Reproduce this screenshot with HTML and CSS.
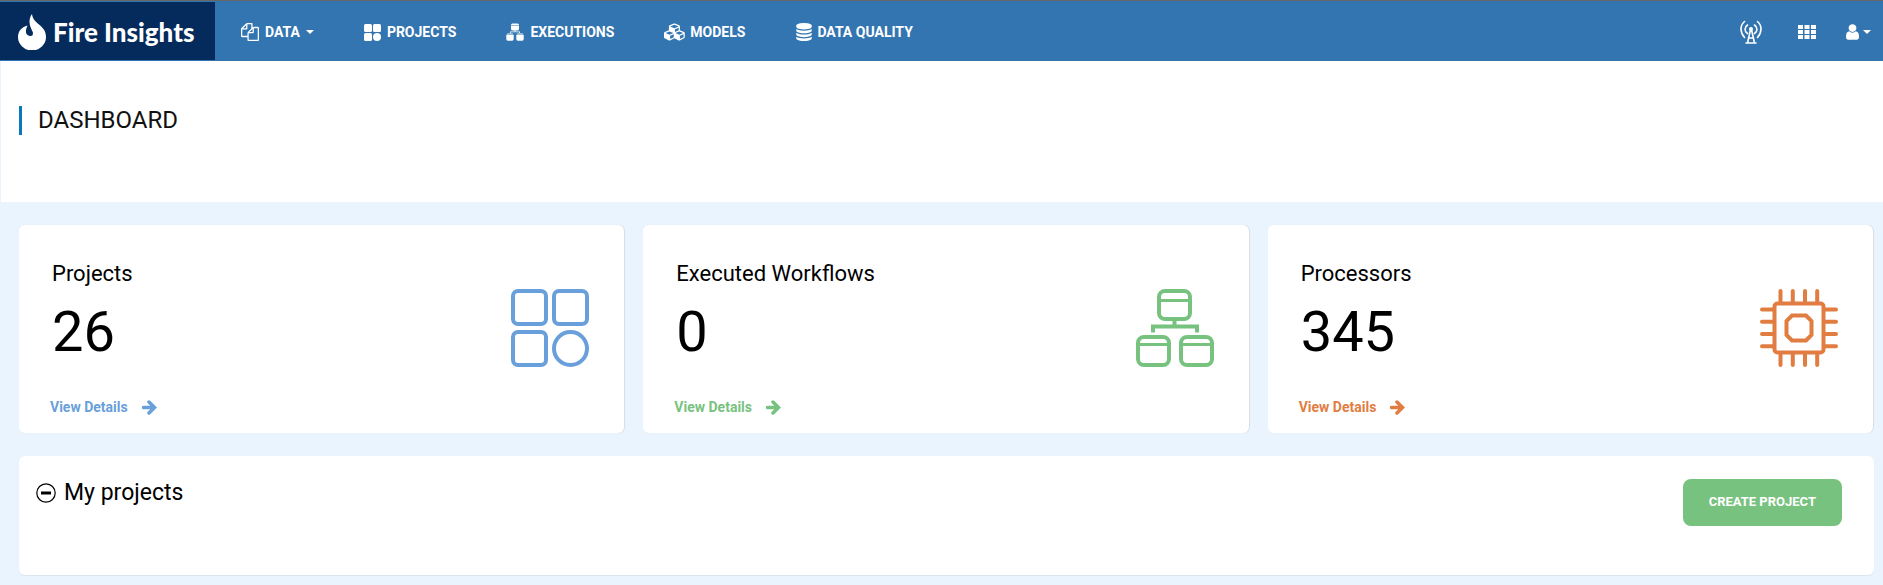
FILE: index.html
```html
<!DOCTYPE html>
<html lang="en">
<head>
<meta charset="utf-8">
<title>Fire Insights</title>
<link rel="stylesheet" href="styles.css">
</head>
<body>
<header class="topbar">
  <a class="brand" href="#">
    <svg class="brand-mark" viewBox="0 0 28 36" aria-hidden="true"><path fill="#fff" d="M14 0C11 4 11 9 12.500 13C13.500 16 15 17.500 15 19.500A2.600 2.600 0 0 1 12 22C9 22 7.500 19.500 8 16.500C8.200 14.500 9 13 9.500 11.500C4 13 0 17 0 23A14 13.500 0 0 0 28 23C28 17 25 14 21 10.500C17.500 7.500 14.500 5 14 0Z"/></svg>
    <span>Fire Insights</span>
  </a>
  <nav class="menu">
    <button class="menu-item" type="button">
      <svg class="i18" viewBox="0 0 1792 1792" aria-hidden="true"><path d="M1696 384q40 0 68 28t28 68v1216q0 40-28 68t-68 28h-960q-40 0-68-28t-28-68v-288h-544q-40 0-68-28t-28-68v-672q0-40 20-88t48-76l408-408q28-28 76-48t88-20h416q40 0 68 28t28 68v328q68-40 128-40h416zm-544 213l-299 299h299v-299zm-640-384l-299 299h299v-299zm196 647l316-316v-416h-384v416q0 40-28 68t-68 28h-416v640h512v-256q0-40 20-88t48-76zm956 804v-1152h-384v416q0 40-28 68t-68 28h-416v640h896z"/></svg>
      <span>DATA</span><span class="caret"></span>
    </button>
    <a class="menu-item" href="#">
      <svg class="i17" viewBox="0 0 17 17" aria-hidden="true"><rect width="8" height="8" rx="1.500"/><rect x="9" width="8" height="8" rx="1.500"/><rect y="9" width="8" height="8" rx="1.500"/><circle cx="13" cy="13" r="4"/></svg>
      <span>PROJECTS</span>
    </a>
    <a class="menu-item" href="#">
      <svg class="i18" viewBox="0 0 18 18" aria-hidden="true"><path d="M6.500 .5h5q1.500 0 1.500 1.500H5q0-1.500 1.500-1.500zM5 2.600h8v3.400q0 1.500-1.500 1.500h-5q-1.500 0-1.500-1.500zM8.600 7.500h.8v1h4.600v1.500h-.8v-.8H4.800v.8H4v-1.500h4.600zM2 10.500h4q1.500 0 1.500 1H.5q0-1 1.500-1zM.3 12h7.400v4q0 1.700-1.500 1.700H1.800Q.3 17.700.3 16zM12 10.500h4q1.500 0 1.500 1h-7q0-1 1.500-1zM10.300 12h7.400v4q0 1.700-1.500 1.700h-4.400q-1.500 0-1.500-1.700z"/></svg>
      <span>EXECUTIONS</span>
    </a>
    <a class="menu-item tight" href="#">
      <svg class="cubes" viewBox="0 0 2304 1792" aria-hidden="true"><path d="M640 1632l384-192v-314l-384 164v342zm-64-454l404-173-404-173-404 173zm1088 454l384-192v-314l-384 164v342zm-64-454l404-173-404-173-404 173zm-448-293l384-165v-266l-384 164v267zm-64-379l441-189-441-189-441 189zm1088 518v416q0 36-19 67t-52 47l-448 224q-25 14-57 14t-57-14l-448-224q-4-2-7-4-2 2-7 4l-448 224q-25 14-57 14t-57-14l-448-224q-33-16-52-47t-19-67v-416q0-38 21.500-70t56.500-48l434-186v-400q0-38 21.500-70t56.500-48l448-192q23-10 50-10t50 10l448 192q35 16 56.500 48t21.500 70v400l434 186q36 16 57 48t21 70z"/></svg>
      <span>MODELS</span>
    </a>
    <a class="menu-item tight" href="#">
      <svg class="i18" viewBox="0 0 1792 1792" aria-hidden="true"><path d="M896 768q237 0 443-43t325-127v170q0 69-103 128t-280 93.500-385 34.500-385-34.500-280-93.500-103-128v-170q119 84 325 127t443 43zm0 768q237 0 443-43t325-127v170q0 69-103 128t-280 93.500-385 34.500-385-34.500-280-93.500-103-128v-170q119 84 325 127t443 43zm0-384q237 0 443-43t325-127v170q0 69-103 128t-280 93.500-385 34.500-385-34.500-280-93.500-103-128v-170q119 84 325 127t443 43zm0-1152q208 0 385 34.500t280 93.500 103 128v128q0 69-103 128t-280 93.500-385 34.500-385-34.500-280-93.500-103-128v-128q0-69 103-128t280-93.500 385-34.500z"/></svg>
      <span>DATA QUALITY</span>
    </a>
  </nav>
  <div class="tools">
    <button class="tool" type="button" aria-label="Broadcast">
      <svg width="22" height="24" viewBox="0 0 22 24" aria-hidden="true"><g fill="none" stroke="#fff" stroke-width="1.600" stroke-linecap="round"><path d="M4.500 1.500Q1 4.500 1 9t3.500 8.500M17.500 1.500Q21 4.500 21 9t-3.500 8.500M7.500 5Q5 6.800 5 9.200T7.500 13.500M14.500 5q2.500 1.800 2.500 4.200t-2.500 4.300"/><path d="M10.300 10.500L7.500 23M11.700 10.500L14.500 23M6 23h10M9 18h4"/></g><circle cx="11" cy="9" r="2"/></svg>
    </button>
    <button class="tool" type="button" aria-label="Apps">
      <svg width="18" height="14" viewBox="0 0 18 14" aria-hidden="true"><path d="M0 0h5v4H0zM6.500 0h5v4h-5zM13 0h5v4h-5zM0 5h5v4H0zM6.500 5h5v4h-5zM13 5h5v4h-5zM0 10h5v4H0zM6.500 10h5v4h-5zM13 10h5v4h-5z"/></svg>
    </button>
    <button class="tool user" type="button" aria-label="Account">
      <svg width="13" height="16" viewBox="256 128 1280 1536" aria-hidden="true"><path d="M1536 1399q0 109-62.500 187t-150.500 78h-854q-88 0-150.500-78t-62.500-187q0-85 8.500-160.500t31.500-152 58.500-131 94-89 134.500-34.500q131 128 313 128t313-128q76 0 134.500 34.500t94 89 58.500 131 31.500 152 8.500 160.500zm-256-887q0 159-112.500 271.500t-271.500 112.500-271.500-112.500-112.500-271.500 112.500-271.500 271.500-112.500 271.500 112.500 112.500 271.500z"/></svg>
      <span class="caret"></span>
    </button>
  </div>
</header>
<section class="page-head"><h1>DASHBOARD</h1></section>
<main>
  <div class="cards">
    <article class="card blue">
      <div class="card-text">
        <h2>Projects</h2>
        <p class="count">26</p>
        <a class="details" href="#">View Details <svg width="15" height="15" viewBox="0 0 15 15" aria-hidden="true"><path d="M1.500 7.500H12M7 2l5.500 5.500L7 13" fill="none" stroke="currentColor" stroke-width="3.500" stroke-linecap="round"/></svg></a>
      </div>
      <svg class="art" viewBox="0 0 78 78" aria-hidden="true"><rect x="2" y="2" width="33" height="33" rx="5"/><rect x="43" y="2" width="33" height="33" rx="5"/><rect x="2" y="43" width="33" height="33" rx="5"/><circle cx="59.500" cy="59.500" r="16.500"/></svg>
    </article>
    <article class="card green">
      <div class="card-text">
        <h2>Executed Workflows</h2>
        <p class="count">0</p>
        <a class="details" href="#">View Details <svg width="15" height="15" viewBox="0 0 15 15" aria-hidden="true"><path d="M1.500 7.500H12M7 2l5.500 5.500L7 13" fill="none" stroke="currentColor" stroke-width="3.500" stroke-linecap="round"/></svg></a>
      </div>
      <svg class="art" viewBox="0 0 78 78" aria-hidden="true"><rect x="23" y="2" width="31" height="28" rx="6"/><rect x="2" y="48" width="31" height="28" rx="6"/><rect x="45" y="48" width="31" height="28" rx="6"/><path stroke-width="3" d="M23 11.500h31M2 55.500h31M45 55.500h31"/><path d="M38.500 30v8M17 43.500V37.500h44v6"/></svg>
    </article>
    <article class="card orange">
      <div class="card-text">
        <h2>Processors</h2>
        <p class="count">345</p>
        <a class="details" href="#">View Details <svg width="15" height="15" viewBox="0 0 15 15" aria-hidden="true"><path d="M1.500 7.500H12M7 2l5.500 5.500L7 13" fill="none" stroke="currentColor" stroke-width="3.500" stroke-linecap="round"/></svg></a>
      </div>
      <svg class="art" viewBox="0 0 78 78" aria-hidden="true"><rect x="14.500" y="14.500" width="49" height="49" rx="3"/><path d="M32 26.500h14l5.500 5.500v14L46 51.500H32L26.500 46V32z"/><path stroke-linecap="round" d="M20.500 2v11M32.800 2v11M45 2v11M57.200 2v11M20.500 65v11M32.800 65v11M45 65v11M57.200 65v11M2 20.500h11M2 32.800h11M2 45h11M2 57.200h11M65 20.500h11M65 32.800h11M65 45h11M65 57.200h11"/></svg>
    </article>
  </div>
  <section class="panel">
    <div class="panel-title">
      <button class="toggle" type="button" aria-label="Collapse"><svg width="20" height="20" viewBox="0 0 20 20" aria-hidden="true"><circle cx="10" cy="10" r="9.200" fill="none" stroke="#000" stroke-width="1.200"/><path d="M5 8.500h10v3H5z"/></svg></button>
      <h2>My projects</h2>
    </div>
    <button class="create" type="button">CREATE PROJECT</button>
  </section>
</main>
</body>
</html>
```
FILE: styles.css
```css
* { box-sizing: border-box; }
body {
  margin: 0;
  background: #e9f4ff;
  color: #000;
  font-family: Roboto, "Liberation Sans", sans-serif;
}
h1, h2, p { margin: 0; font-weight: 400; }
a { text-decoration: none; color: inherit; }
button { border: 0; padding: 0; background: none; font: inherit; color: inherit; cursor: pointer; }
svg { display: block; flex: none; }

.topbar {
  display: flex;
  align-items: stretch;
  height: 61px;
  padding: 1px 0;
  border-top: 1px solid #666;
  background: #3375b1;
  color: #fff;
  fill: #fff;
}
.brand {
  display: flex;
  align-items: center;
  gap: 7px;
  width: 215px;
  padding: 2px 0 0 18px;
  background: #052b5c;
  font: 900 26px/32px Lato, sans-serif;
}
.brand-mark { width: 28px; height: 36px; }
.menu {
  display: flex;
  align-items: center;
  gap: 50px;
  padding: 2px 0 0 26px;
}
.menu-item {
  display: flex;
  align-items: center;
  gap: 6px;
  font-size: 14px;
  font-weight: 700;
  line-height: 20px;
}
.menu-item.tight { gap: 4px; }
.i18 { width: 18px; height: 18px; }
.i17 { width: 17px; height: 17px; }
.cubes { width: 22px; height: 18px; }
.caret {
  border: 4px solid transparent;
  border-top-color: #fff;
  border-bottom: 0;
}
.tools {
  display: flex;
  align-items: center;
  gap: 30px;
  margin-left: auto;
  padding: 1px 12px 0 0;
}
.tool:first-child { margin-right: 6px; }
.user { display: flex; align-items: center; gap: 4px; }

.page-head {
  margin-left: 1px;
  padding: 45px 18px 67px;
  background: #fff;
}
.page-head h1 {
  padding-left: 16px;
  border-left: 3px solid #0a79b9;
  color: #111;
  font-size: 24px;
  line-height: 29px;
}

main {
  display: flex;
  flex-direction: column;
  gap: 23px;
  padding: 23px 9px 10px 19px;
}
.cards {
  display: grid;
  grid-template-columns: repeat(3, 1fr);
  gap: 19px;
  padding-right: 1px;
}
.card {
  display: flex;
  align-items: center;
  justify-content: space-between;
  padding: 33px 35px 16px 31px;
  border-radius: 6px;
  background: #fff;
  box-shadow: 1px 0 1px #d8dde2;
}
.card h2 { padding-left: 2px; font-size: 22px; line-height: 32px; }
.count { padding-left: 2px; font-size: 56px; line-height: 84px; }
.details {
  display: flex;
  align-items: center;
  gap: 14px;
  margin-top: 23px;
  color: var(--tone);
  font-size: 14px;
  font-weight: 700;
  line-height: 20px;
}
.art {
  width: 78px;
  height: 78px;
  margin-bottom: 19px;
  fill: none;
  stroke: var(--tone);
  stroke-width: 4;
}
.blue { --tone: #699fda; }
.green { --tone: #78c27f; }
.orange { --tone: #e27d42; }

.panel {
  display: flex;
  align-items: flex-start;
  justify-content: space-between;
  min-height: 119px;
  padding: 23px 32px 20px 17px;
  border-radius: 6px;
  background: #fff;
  box-shadow: 0 1px 1px #dbe4ec;
}
.panel-title { display: flex; align-items: center; gap: 8px; }
.panel-title h2 { font-size: 23px; line-height: 28px; }
.create {
  padding: 14px 26px 15px;
  border-radius: 8px;
  background: #78c27f;
  color: #fff;
  font-size: 13px;
  font-weight: 700;
  line-height: 18px;
}
```
